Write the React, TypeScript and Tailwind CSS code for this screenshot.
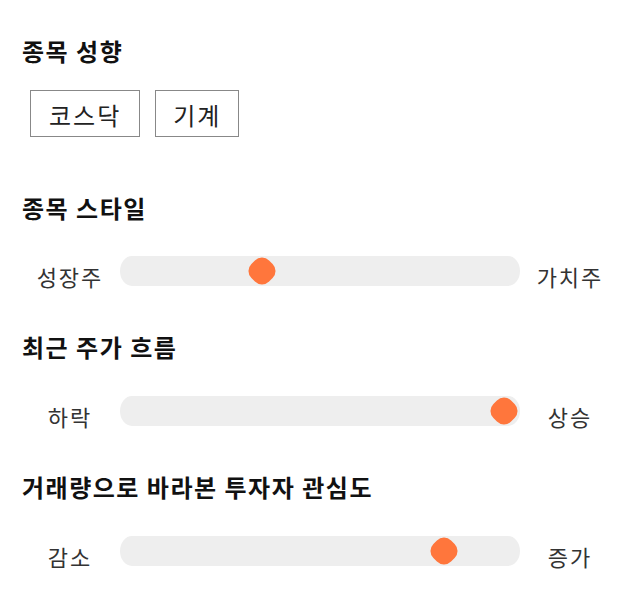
import React from "react";

const font = { fontFamily: '"Noto Sans CJK KR", "Noto Sans", sans-serif' };

function Slider({ left, right, value }: { left: string; right: string; value: number }) {
  return (
    <div className="flex h-[40px] items-center">
      <div className="w-[100px] pt-[10px] text-center text-[22px] leading-[30px] tracking-[2px] text-[#333]">{left}</div>
      <div className="relative h-[30px] flex-1 rounded-[12px/50%] bg-[#eeeeee]">
        <div
          className="absolute top-1/2 h-[25px] w-[25px] -translate-x-1/2 -translate-y-1/2 rotate-45 rounded-[10px] bg-[#ff763c]"
          style={{ left: `${value}%` }}
        />
      </div>
      <div className="w-[100px] pt-[10px] text-center text-[22px] leading-[30px] tracking-[2px] text-[#333]">{right}</div>
    </div>
  );
}

export default function App() {
  return (
    <div className="w-[640px] h-[606px] bg-white px-5 pt-[35px]" style={font}>
      <h2 className="pl-[2px] text-[24px] font-bold leading-[32px] tracking-[1.5px] text-[#111]">종목 성향</h2>
      <div className="mt-[23px] flex gap-[15px] pl-[10px]">
        <div className="border border-[#888] px-[18px] pt-[3px] text-[24px] leading-[42px] tracking-[2px] text-[#222]">코스닥</div>
        <div className="border border-[#888] px-[17px] pt-[3px] text-[24px] leading-[42px] tracking-[2px] text-[#222]">기계</div>
      </div>
      <h2 className="mt-[55px] pl-[2px] text-[24px] font-bold leading-[32px] tracking-[1.5px] text-[#111]">종목 스타일</h2>
      <div className="mt-[27px]">
        <Slider left="성장주" right="가치주" value={35.5} />
      </div>
      <h2 className="mt-[40px] pl-[2px] text-[24px] font-bold leading-[32px] tracking-[1.5px] text-[#111]">최근 주가 흐름</h2>
      <div className="mt-[28px]">
        <Slider left="하락" right="상승" value={96} />
      </div>
      <h2 className="mt-[40px] pl-[2px] text-[24px] font-bold leading-[32px] tracking-[1.5px] text-[#111]">거래량으로 바라본 투자자 관심도</h2>
      <div className="mt-[28px]">
        <Slider left="감소" right="증가" value={81} />
      </div>
    </div>
  );
}
